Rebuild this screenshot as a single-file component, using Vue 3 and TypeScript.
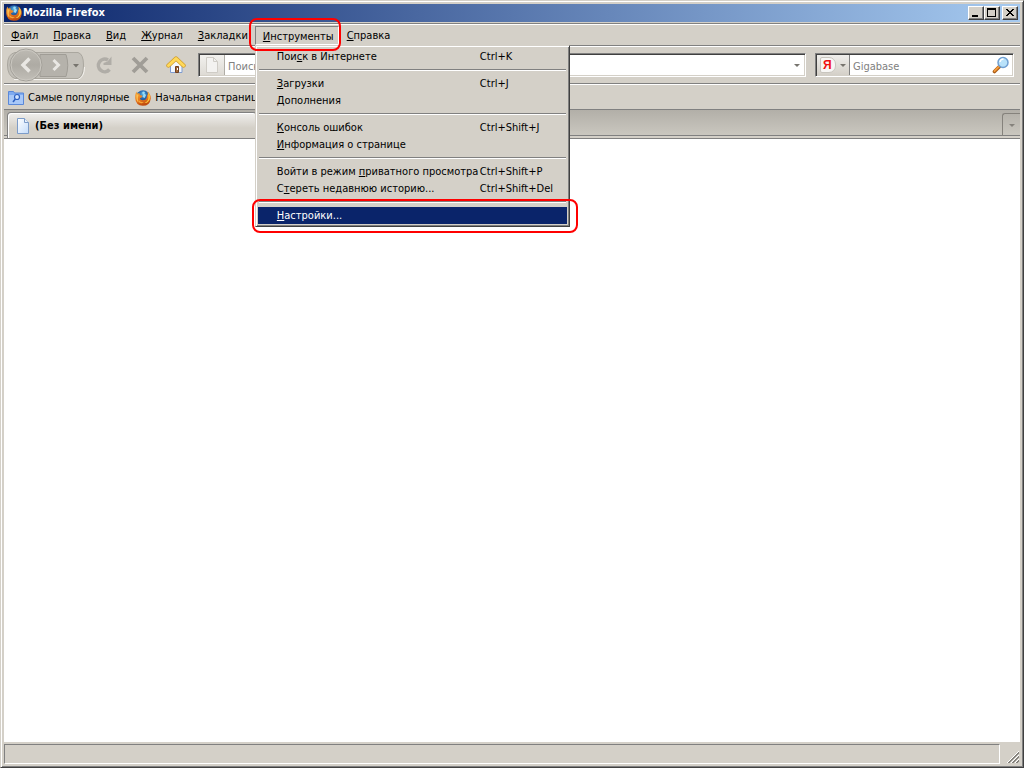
<script setup lang="ts">
interface Entry {
  before: string
  key: string
  after: string
  shortcut?: string
  active?: boolean
}

const menusLeft: { key: string; rest: string }[] = [
  { key: 'Ф', rest: 'айл' },
  { key: 'П', rest: 'равка' },
  { key: 'В', rest: 'ид' },
  { key: 'Ж', rest: 'урнал' },
  { key: 'З', rest: 'акладки' },
]

const groups: Entry[][] = [
  [{ before: 'Пои', key: 'с', after: 'к в Интернете', shortcut: 'Ctrl+K' }],
  [
    { before: '', key: 'З', after: 'агрузки', shortcut: 'Ctrl+J' },
    { before: '', key: 'Д', after: 'ополнения' },
  ],
  [
    { before: '', key: 'К', after: 'онсоль ошибок', shortcut: 'Ctrl+Shift+J' },
    { before: '', key: 'И', after: 'нформация о странице' },
  ],
  [
    { before: 'Войти в режим ', key: 'п', after: 'риватного просмотра', shortcut: 'Ctrl+Shift+P' },
    { before: 'С', key: 'т', after: 'ереть недавнюю историю...', shortcut: 'Ctrl+Shift+Del' },
  ],
  [{ before: '', key: 'Н', after: 'астройки...', active: true }],
]
</script>

<template>
  <div class="window">
    <svg class="defs" width="0" height="0" aria-hidden="true">
      <defs>
        <radialGradient id="globe" cx=".5" cy=".3" r=".7">
          <stop offset="0" stop-color="#5cb8e6" />
          <stop offset=".4" stop-color="#2a6cb0" />
          <stop offset="1" stop-color="#123070" />
        </radialGradient>
        <linearGradient id="fox" x1="0" y1="0" x2=".3" y2="1">
          <stop offset="0" stop-color="#f7a838" />
          <stop offset=".6" stop-color="#e87820" />
          <stop offset="1" stop-color="#c04c10" />
        </linearGradient>
        <linearGradient id="page" x1="0" y1="0" x2="1" y2="1">
          <stop offset="0" stop-color="#ffffff" />
          <stop offset="1" stop-color="#c4dcfa" />
        </linearGradient>
        <linearGradient id="disc" x1="0" y1="0" x2="0" y2="1">
          <stop offset="0" stop-color="#bdbab3" />
          <stop offset=".5" stop-color="#aeaba4" />
          <stop offset="1" stop-color="#c2bfb8" />
        </linearGradient>
        <symbol id="firefox" viewBox="0 0 16 16">
          <circle cx="8" cy="7" r="6.800" fill="url(#globe)" />
          <path d="M8 1.500l2 .5-.6 1.500 1.600 1.500-1.300 3L7.500 7 8.500 4.500 7 3z" fill="#9adcf6" />
          <path d="M1.200 1.500L2.200 3.500Q3.500 2.800 4.800 3.600L4.800 5l2.800.8-1 1.600-1.800.8Q5.200 10.200 7.800 10.200q3 0 3.800-2.200.8-1.800.2-4L13 5.200q0-2-.9-3.600Q16 4 15.800 8.400 15 15.800 7.800 15.800.6 15.200.2 8.200 0 4.500 1.200 1.500z" fill="url(#fox)" />
          <path d="M13.200 2.600q2.500 3 1.400 6.800Q13 13 9.500 13q3.900-1.800 3.900-5.200z" fill="#fcc93c" />
          <path d="M1.500 4Q.6 9 3.200 12.500 2 8 3.500 5z" fill="#fcc050" />
          <path d="M3.500 10Q5.500 12.500 9 12.200q-3 2-5.500-.2z" fill="#f7a838" />
        </symbol>
      </defs>
    </svg>

    <header class="titlebar">
      <svg class="icon16" aria-hidden="true"><use href="#firefox" /></svg>
      <h1>Mozilla Firefox</h1>
      <div class="winbuttons">
        <button type="button" aria-label="Свернуть">
          <svg width="12" height="10" shape-rendering="crispEdges"><path d="M2 7h6v2H2z" /></svg>
        </button>
        <button type="button" aria-label="Развернуть">
          <svg width="12" height="10" shape-rendering="crispEdges"><path fill-rule="evenodd" d="M1 0h9v9H1zM2 2v6h7V2z" /></svg>
        </button>
        <button type="button" class="close" aria-label="Закрыть">
          <svg width="12" height="10" shape-rendering="crispEdges"><path d="M2 1h2v1h1v1h2V2h1V1h2v1H9v1H8v1H7v1h1v1h1v1h1v1H8V7H7V6H5v1H4v1H2V7h1V6h1V5h1V4H4V3H3V2H2z" /></svg>
        </button>
      </div>
    </header>

    <nav class="menubar bar">
      <button v-for="m in menusLeft" :key="m.key" type="button" class="menu"><u>{{ m.key }}</u>{{ m.rest }}</button>
      <div class="menuhost">
        <button type="button" class="menu open" aria-expanded="true"><u>И</u>нструменты</button>
        <div class="popup" role="menu">
          <div v-for="(g, i) in groups" :key="i" class="group" role="group">
            <button v-for="e in g" :key="e.after" type="button" role="menuitem" class="entry" :class="{ active: e.active }">
              <span>{{ e.before }}<u>{{ e.key }}</u>{{ e.after }}</span>
              <span>{{ e.shortcut }}</span>
            </button>
          </div>
          <div class="mark mark-entry"></div>
        </div>
        <div class="mark mark-menu"></div>
      </div>
      <button type="button" class="menu"><u>С</u>правка</button>
    </nav>

    <div class="toolbar bar">
      <div class="history">
        <svg width="80" height="34" aria-hidden="true">
          <path d="M9 4.500H72Q77.500 6 77.500 17T72 30.500H9Q1.500 28 1.500 17T9 4.500z" fill="#c3c0b9" stroke="#aaa79f" />
          <path d="M8 31.500H72Q78.500 29 78.500 19" fill="none" stroke="#f4f2ee" />
          <path d="M34 6.500H60Q63.500 17 60 28.500H34z" fill="#b5b2ab" stroke="#a09d96" />
          <circle cx="20" cy="17" r="16" fill="url(#disc)" stroke="#a4a19a" />
          <circle cx="20" cy="17" r="15" fill="none" stroke="#cbc8c1" />
          <path d="M23.500 10.500L17 17l6.500 6.500" fill="none" stroke="#e9e7e3" stroke-width="3.500" />
          <path d="M47.500 12l5 5-5 5" fill="none" stroke="#e9e7e3" stroke-width="3" />
          <path d="M67 16h6l-3 3.500z" fill="#77746e" />
        </svg>
        <button type="button" class="back" aria-label="Назад"></button>
        <button type="button" class="forward" aria-label="Вперёд"></button>
        <button type="button" class="recent" aria-label="История"></button>
      </div>
      <button type="button" class="tool" aria-label="Обновить">
        <svg width="20" height="20"><path d="M14 5A6.300 6.300 0 1 0 15.500 14.500" fill="none" stroke="#b0ada7" stroke-width="3.500" /><path d="M17.500 1.500v8.500H9.500V8l4-1.500z" fill="#b0ada7" /></svg>
      </button>
      <button type="button" class="tool" aria-label="Остановить">
        <svg width="20" height="20"><path d="M3 3l14 14M17 3L3 17" fill="none" stroke="#a09d97" stroke-width="3.800" /></svg>
      </button>
      <button type="button" class="tool" aria-label="Домой">
        <svg width="20" height="20">
          <path d="M4.500 9L10 4l6 5v8.500H4.500z" fill="#f3f7fd" stroke="#7f9cd0" />
          <path d="M9.500 11.500h3v6h-3z" fill="#a46a3a" stroke="#704020" />
          <path d="M11 13h1v2h-1z" fill="#fff" />
          <path d="M2.500 10.500L10 3.500l7.500 7" fill="none" stroke="#d09c2c" stroke-width="4.400" stroke-linecap="round" stroke-linejoin="round" />
          <path d="M2.500 10.500L10 3.500l7.500 7" fill="none" stroke="#ffd95a" stroke-width="3" stroke-linecap="round" stroke-linejoin="round" />
        </svg>
      </button>
      <div class="field address">
        <span class="siteicon">
          <svg width="16" height="18" aria-hidden="true"><path d="M2.500 1.500h7l4 4v11h-11z" fill="#f3f2f0" stroke="#cfccc6" /><path d="M9.500 1.500v4h4" fill="none" stroke="#cfccc6" /></svg>
        </span>
        <input type="text" aria-label="Адрес" placeholder="Поиск в закладках и журнале" />
        <button type="button" class="drop" aria-label="Показать историю"><svg width="6" height="3"><path d="M0 0h6L3 3z" fill="#77746e" /></svg></button>
      </div>
      <div class="field search">
        <button type="button" class="engine" aria-label="Поисковая система">
          <span class="yandex">Я</span>
          <svg width="6" height="3"><path d="M0 0h6L3 3z" fill="#77746e" /></svg>
        </button>
        <input type="text" aria-label="Поиск" placeholder="Gigabase" />
        <button type="button" class="go" aria-label="Найти">
          <svg width="18" height="18">
            <path d="M2.500 15.500l5-5" stroke="#a95b16" stroke-width="3.600" stroke-linecap="round" />
            <path d="M2.500 15l5-5" stroke="#f39b3c" stroke-width="1.800" stroke-linecap="round" />
            <circle cx="11" cy="6.500" r="5" fill="#b9e2fa" stroke="#6f9fd2" stroke-width="1.500" />
            <path d="M8 6q.5-3 3.500-3" fill="none" stroke="#fff" stroke-width="1.500" />
          </svg>
        </button>
      </div>
    </div>

    <div class="bookmarks bar">
      <button type="button" class="bookmark">
        <svg width="16" height="16" aria-hidden="true">
          <path d="M.5 1.500h5l1 1.500h9v11.500H.5z" fill="#7fabf0" stroke="#5a88d8" />
          <path d="M1 5h14v9H1z" fill="#a8c8f8" />
          <circle cx="9" cy="7" r="2.500" fill="#d3e5ff" stroke="#2c5fc0" stroke-width="1.200" />
          <path d="M7.300 9L5 12" stroke="#2c5fc0" stroke-width="1.500" />
        </svg>
        Самые популярные
      </button>
      <a class="bookmark" href="#start"><svg class="icon16" aria-hidden="true"><use href="#firefox" /></svg>Начальная страница</a>
    </div>

    <div class="tabs">
      <button type="button" class="tab">
        <svg width="16" height="16" aria-hidden="true"><path d="M2.500.5h7l4 4v11h-11z" fill="url(#page)" stroke="#7d9cc8" /><path d="M9.500.5v4h4" fill="#e8f1fd" stroke="#7d9cc8" /></svg>
        <b>(Без имени)</b>
      </button>
      <button type="button" class="alltabs" aria-label="Список вкладок"><svg width="6" height="3"><path d="M0 0h6L3 3z" fill="#85827c" /></svg></button>
    </div>

    <main class="page"></main>

    <footer class="status">
      <div class="panel"></div>
      <svg width="14" height="14" aria-hidden="true">
        <path d="M1 13L13 1M5 13l8-8M9 13l4-4" stroke="#fff" />
        <path d="M2 13L13 2M3 13L13 3M6 13l7-7M7 13l6-6M10 13l3-3M11 13l2-2" stroke="#85827c" />
      </svg>
    </footer>
  </div>
</template>

<style>
body {
  margin: 0;
}
</style>

<style scoped>
.window {
  box-sizing: border-box;
  display: flex;
  flex-direction: column;
  height: 100vh;
  padding: 3px;
  overflow: hidden;
  background: #d4d0c8;
  border: 1px solid;
  border-color: #d4d0c8 #404040 #404040 #d4d0c8;
  box-shadow: inset 1px 1px #fff, inset -1px -1px #808080;
  font: 11px/17px "DejaVu Sans Condensed", "DejaVu Sans", sans-serif;
  color: #000;
}
.defs {
  position: absolute;
}
button,
input {
  margin: 0;
  padding: 0;
  border: 0;
  background: none;
  font: inherit;
  color: inherit;
  white-space: nowrap;
}
svg {
  display: block;
  flex: none;
}
u {
  text-underline-offset: 1px;
}
.icon16 {
  width: 16px;
  height: 16px;
}
.titlebar {
  display: flex;
  align-items: center;
  flex: none;
  height: 18px;
  padding: 0 2px;
  gap: 1px;
  background: linear-gradient(90deg, #0a246a, #a6caf0);
}
h1 {
  flex: 1;
  margin: 0;
  font-size: 11px;
  line-height: 18px;
  color: #fff;
}
.winbuttons {
  display: flex;
}
.winbuttons button {
  width: 16px;
  height: 14px;
  padding: 1px;
  background: #d4d0c8;
  border: 1px solid;
  border-color: #fff #404040 #404040 #fff;
  box-shadow: inset -1px -1px #808080;
}
.winbuttons .close {
  margin-left: 2px;
}
.bar {
  display: flex;
  flex: none;
  box-sizing: border-box;
  border-top: 1px solid #808080;
  box-shadow: inset 0 1px #fff;
}
.menubar {
  height: 22px;
  margin-top: 1px;
  padding-top: 2px;
  gap: 1px;
}
.menu {
  box-sizing: border-box;
  height: 19px;
  padding: 0 7px;
}
.menuhost {
  position: relative;
  margin-left: -1px;
}
.open {
  padding: 2px 4px 0 7px;
  line-height: 16px;
  border: 1px solid;
  border-color: #808080 #fff #fff #808080;
}
.popup {
  position: absolute;
  z-index: 2;
  top: 19px;
  left: 0;
  box-sizing: border-box;
  width: 315px;
  padding: 2px;
  background: #d4d0c8;
  border: 1px solid;
  border-color: #d4d0c8 #404040 #404040 #d4d0c8;
  box-shadow: inset 1px 1px #fff, inset -1px -1px #808080;
}
.group + .group::before {
  content: "";
  display: block;
  height: 1px;
  margin: 4px 1px;
  border-top: 1px solid #808080;
  background: #fff;
}
.entry {
  display: grid;
  grid-template-columns: 203px 1fr;
  width: 100%;
  height: 17px;
  padding-left: 19px;
  text-align: left;
}
.active {
  background: #0a246a;
  color: #fff;
}
.mark {
  position: absolute;
  z-index: 3;
  box-sizing: border-box;
  border: 2px solid #f00;
  border-radius: 8px;
  pointer-events: none;
}
.mark-menu {
  top: -8px;
  left: -6px;
  right: -2px;
  height: 33px;
}
.mark-entry {
  left: -4px;
  right: -9px;
  bottom: -7px;
  height: 34px;
}
.toolbar {
  height: 38px;
  align-items: center;
  padding: 1px 6px 0 2px;
}
.history {
  position: relative;
  width: 80px;
  height: 34px;
  margin-right: 8px;
}
.history button {
  position: absolute;
  top: 2px;
  height: 30px;
}
.back {
  left: 4px;
  width: 32px;
}
.forward {
  left: 38px;
  width: 24px;
}
.recent {
  left: 64px;
  width: 12px;
}
.tool {
  width: 20px;
  margin-right: 16px;
}
.field {
  display: flex;
  box-sizing: border-box;
  height: 24px;
  padding: 1px;
  background: #fff;
  border: 1px solid;
  border-color: #808080 #fff #fff #808080;
  box-shadow: inset 1px 1px #404040, inset -1px -1px #d4d0c8;
}
.field input {
  flex: 1;
  min-width: 0;
  padding: 2px 3px 0;
  outline: 0;
}
.field input::placeholder {
  color: #808080;
  opacity: 1;
}
.address {
  flex: 1;
  margin: 0 9px 0 -4px;
}
.siteicon {
  display: flex;
  align-items: center;
  justify-content: center;
  width: 24px;
  background: linear-gradient(#f2f1ee, #dedbd5);
  border-right: 1px solid #b0ada6;
}
.drop {
  display: flex;
  align-items: center;
  justify-content: center;
  width: 14px;
}
.search {
  width: 199px;
}
.engine {
  display: flex;
  align-items: center;
  gap: 4px;
  width: 33px;
  padding: 0 3px;
  background: linear-gradient(#efeeeb, #d4d0c8);
  border-right: 1px solid #808080;
}
.yandex {
  box-sizing: border-box;
  width: 16px;
  height: 16px;
  padding-left: 2px;
  background: #f7f6f4;
  border: 1px solid #c8c5be;
  border-radius: 2px 7px 7px 2px;
  font: bold 12px/14px "Liberation Sans", sans-serif;
  text-align: left;
  color: #f01010;
}
.go {
  width: 20px;
}
.bookmarks {
  height: 26px;
  align-items: center;
  gap: 6px;
  padding: 2px 4px 0;
}
.bookmark {
  display: flex;
  align-items: center;
  gap: 4px;
  color: #000;
  text-decoration: none;
  white-space: nowrap;
}
.tabs {
  display: flex;
  flex: none;
  align-items: flex-end;
  justify-content: space-between;
  box-sizing: border-box;
  height: 30px;
  padding-left: 3px;
  background: linear-gradient(#b2afa8, #c9c6be 24px);
  border-top: 1px solid #808080;
  border-bottom: 1px solid #808080;
  box-shadow: inset 0 -2px #d4d0c8, inset 0 -3px #808080;
}
.tab {
  display: flex;
  align-items: center;
  gap: 4px;
  box-sizing: border-box;
  width: 250px;
  height: 26px;
  padding: 0 7px;
  background: linear-gradient(#f0efed, #d4d0c8 60%);
  border: 1px solid #808080;
  border-bottom: 0;
  border-radius: 4px 4px 0 0;
  box-shadow: inset 1px 1px #fff;
}
.alltabs {
  display: flex;
  align-items: center;
  justify-content: center;
  box-sizing: border-box;
  width: 18px;
  height: 23px;
  margin-bottom: 2px;
  border: 1px solid #85827c;
  border-width: 1px 0 0 1px;
  border-radius: 3px 0 0 0;
}
.page {
  flex: 1;
  min-height: 0;
  background: #fff;
}
.status {
  display: flex;
  flex: none;
  align-items: flex-end;
  gap: 6px;
  padding-top: 2px;
}
.panel {
  flex: 1;
  box-sizing: border-box;
  height: 20px;
  border: 1px solid;
  border-color: #808080 #fff #fff #808080;
}
</style>
